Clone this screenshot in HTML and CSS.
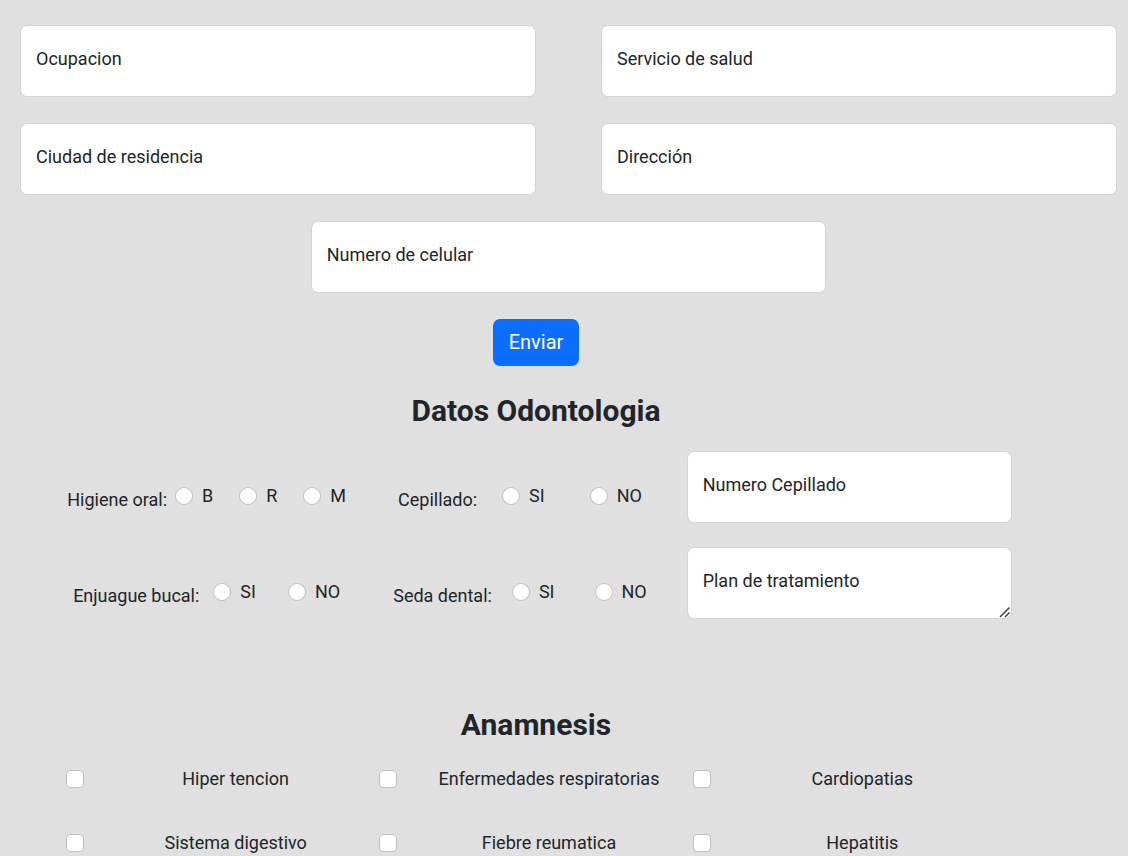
FILE: index.html
```html
<!DOCTYPE html>
<html lang="es">
<head>
  <meta charset="utf-8">
  <meta name="viewport" content="width=device-width, initial-scale=1">
  <title>Datos del paciente</title>
  <link rel="stylesheet" href="styles.css">
</head>
<body>
  <form class="patient">
    <div class="pair">
      <div class="field">
        <input class="control" type="text" id="ocupacion">
        <label class="field-label" for="ocupacion">Ocupacion</label>
      </div>
      <div class="field">
        <input class="control" type="text" id="servicio">
        <label class="field-label" for="servicio">Servicio de salud</label>
      </div>
      <div class="field">
        <input class="control" type="text" id="ciudad">
        <label class="field-label" for="ciudad">Ciudad de residencia</label>
      </div>
      <div class="field">
        <input class="control" type="text" id="direccion">
        <label class="field-label" for="direccion">Dirección</label>
      </div>
      <div class="field field-center">
        <input class="control" type="tel" id="celular">
        <label class="field-label" for="celular">Numero de celular</label>
      </div>
    </div>
    <div class="section actions">
      <button class="submit" type="submit">Enviar</button>
    </div>
  </form>

  <section class="section">
    <h2 class="title">Datos Odontologia</h2>
    <div class="dental">
      <div class="question question-tight" role="radiogroup" aria-labelledby="q-higiene">
        <span class="question-label" id="q-higiene">Higiene oral:</span>
        <label class="option"><input class="radio" type="radio" name="higiene">B</label>
        <label class="option"><input class="radio" type="radio" name="higiene">R</label>
        <label class="option"><input class="radio" type="radio" name="higiene">M</label>
      </div>
      <div class="question question-loose" role="radiogroup" aria-labelledby="q-cepillado">
        <span class="question-label" id="q-cepillado">Cepillado:</span>
        <label class="option"><input class="radio" type="radio" name="cepillado">SI</label>
        <label class="option"><input class="radio" type="radio" name="cepillado">NO</label>
      </div>
      <div class="cell">
        <div class="field">
          <input class="control" type="text" id="numero-cepillado">
          <label class="field-label" for="numero-cepillado">Numero Cepillado</label>
        </div>
      </div>
      <div class="question question-medium" role="radiogroup" aria-labelledby="q-enjuague">
        <span class="question-label" id="q-enjuague">Enjuague bucal:</span>
        <label class="option"><input class="radio" type="radio" name="enjuague">SI</label>
        <label class="option"><input class="radio" type="radio" name="enjuague">NO</label>
      </div>
      <div class="question question-wide" role="radiogroup" aria-labelledby="q-seda">
        <span class="question-label" id="q-seda">Seda dental:</span>
        <label class="option"><input class="radio" type="radio" name="seda">SI</label>
        <label class="option"><input class="radio" type="radio" name="seda">NO</label>
      </div>
      <div class="cell">
        <div class="field">
          <textarea class="control" id="plan"></textarea>
          <label class="field-label" for="plan">Plan de tratamiento</label>
          <svg class="grip" viewBox="0 0 12 12" aria-hidden="true"><path d="M1 11 10.500 1.500M6 11 10.500 6.500"/></svg>
        </div>
      </div>
    </div>
  </section>

  <section class="section history">
    <h2 class="title">Anamnesis</h2>
    <div class="conditions">
      <div class="condition"><input class="check" type="checkbox" id="c1"><label class="condition-label" for="c1">Hiper tencion</label></div>
      <div class="condition"><input class="check" type="checkbox" id="c2"><label class="condition-label" for="c2">Enfermedades respiratorias</label></div>
      <div class="condition"><input class="check" type="checkbox" id="c3"><label class="condition-label" for="c3">Cardiopatias</label></div>
      <div class="condition"><input class="check" type="checkbox" id="c4"><label class="condition-label" for="c4">Sistema digestivo</label></div>
      <div class="condition"><input class="check" type="checkbox" id="c5"><label class="condition-label" for="c5">Fiebre reumatica</label></div>
      <div class="condition"><input class="check" type="checkbox" id="c6"><label class="condition-label" for="c6">Hepatitis</label></div>
    </div>
  </section>
</body>
</html>
```

FILE: styles.css
```css
* {
  box-sizing: border-box;
}

body {
  margin: 0;
  background: #e0e0e0;
  color: #212529;
  font-family: Roboto, "Liberation Sans", sans-serif;
  font-size: 18px;
  line-height: 27px;
}

.pair {
  display: grid;
  grid-template-columns: 1fr 1fr;
  gap: 26px 65px;
  padding: 25px 11px 0 20px;
}

.field {
  position: relative;
}

.field-center {
  grid-column: 1 / -1;
  justify-self: center;
  width: 47%;
}

.control {
  display: block;
  width: 100%;
  height: 72px;
  margin: 0;
  padding: 29px 15px 11px;
  border: 1px solid #ced4da;
  border-radius: 7px;
  background: #fff;
  color: inherit;
  font: inherit;
}

textarea.control {
  min-height: 72px;
  resize: vertical;
}

textarea.control::-webkit-resizer {
  background: transparent;
}

.field-label {
  position: absolute;
  top: 20px;
  left: 16px;
  pointer-events: none;
}

.grip {
  position: absolute;
  right: 1px;
  bottom: 1px;
  width: 12px;
  height: 12px;
  fill: none;
  stroke: #444;
  stroke-width: 1.5;
  pointer-events: none;
}

.section {
  margin: 0 106px 0 50px;
}

.actions {
  display: flex;
  justify-content: center;
  padding: 26px 0 27px;
}

.submit {
  padding: 8px 16px;
  border: 0;
  border-radius: 7px;
  background: #0d6efd;
  color: #fff;
  font: inherit;
  font-size: 20px;
  line-height: 31px;
}

.title {
  margin: 0 0 22px;
  font-size: 30px;
  font-weight: 700;
  line-height: 36px;
  text-align: center;
}

.dental {
  display: grid;
  grid-template-columns: 313fr 313fr 345fr;
  row-gap: 24px;
}

.cell {
  padding: 0 10px;
}

.question {
  display: flex;
  justify-content: center;
  align-items: flex-start;
  padding-top: 31px;
}

.question-label {
  padding-top: 4px;
}

.option {
  display: flex;
  align-items: center;
  gap: 9px;
}

.option + .option {
  margin-left: 20px;
}

.question-tight {
  gap: 8px;
}

.question-medium {
  gap: 14px;
}

.question-tight .option + .option,
.question-medium .option + .option {
  margin-left: 18px;
}

.question-wide {
  gap: 20px;
}

.question-loose {
  gap: 25px;
}

.radio,
.check {
  flex: none;
  appearance: none;
  width: 18px;
  height: 18px;
  margin: 0;
  border: 1px solid #bfbfbf;
  background: #fff;
}

.radio {
  border-radius: 50%;
}

.check {
  border-radius: 4px;
}

.radio:checked,
.check:checked {
  border-color: #0d6efd;
  background: #0d6efd;
}

.history {
  padding-top: 88px;
}

.conditions {
  display: grid;
  grid-template-columns: 1fr 1fr 1fr;
  row-gap: 37px;
  margin-right: 32px;
}

.condition {
  display: flex;
  align-items: center;
  gap: 24px;
  padding-left: 16px;
}

.condition-label {
  flex: 1;
  text-align: center;
}
```
